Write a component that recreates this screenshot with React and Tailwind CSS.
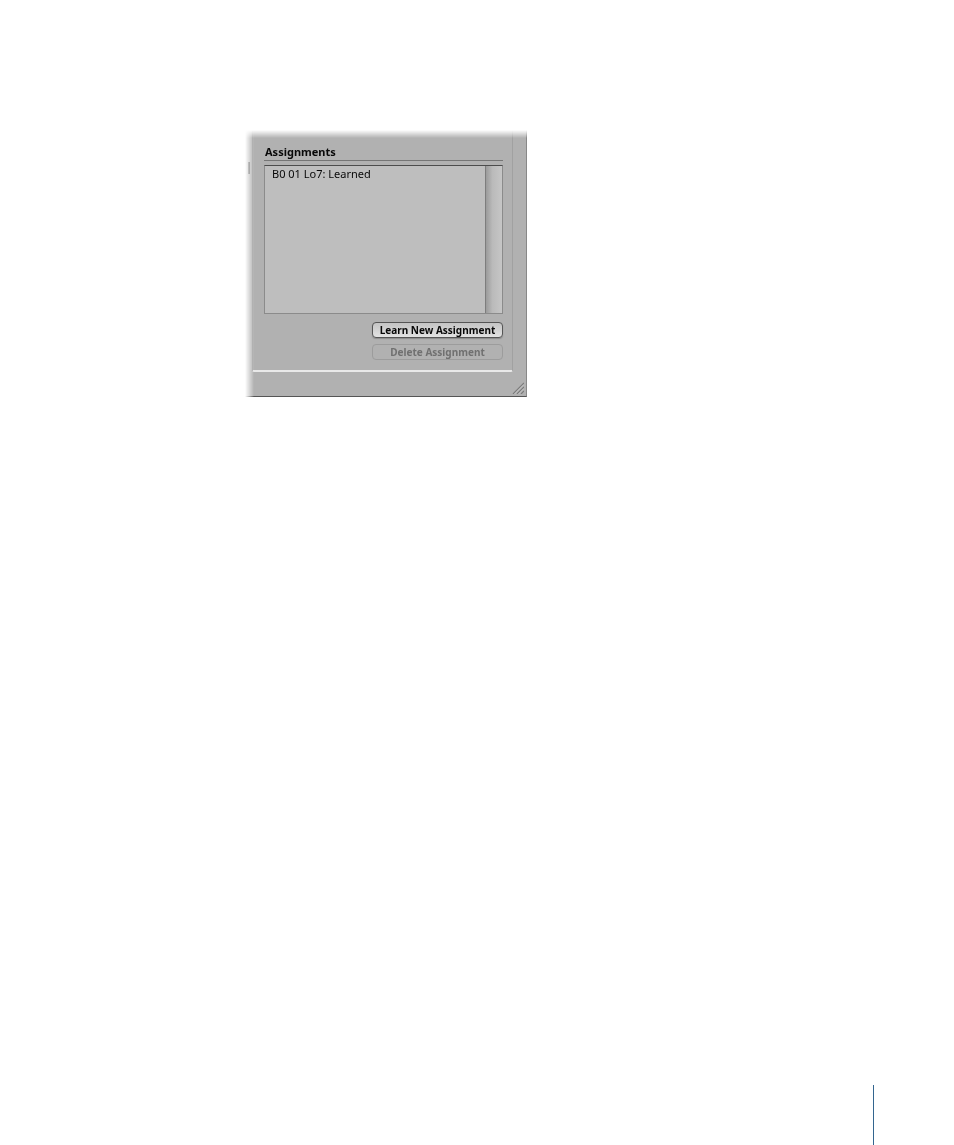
import React, { useState } from 'react';

const ScrollTrack = () => (
  <div className="w-[17px] shrink-0 border-l border-[#7d7d7d] bg-linear-to-r from-[#9b9b9b] via-[#bababa] via-40% to-[#c6c6c6]" />
);

const AssignmentList = ({ items }) => (
  <div className="flex h-[149px] border border-[#8b8b8b] border-t-[#4c4c4c] bg-[#bebebe]">
    <ul className="min-w-0 flex-1 px-[7px] text-[11px] leading-4 text-[#080808]">
      {items.map((item) => (
        <li key={item}>{item}</li>
      ))}
    </ul>
    <ScrollTrack />
  </div>
);

const PanelButton = ({ children, ...props }) => (
  <button
    type="button"
    className="h-4 w-[131px] rounded-sm border border-[#555555] bg-linear-to-b from-[#c4c4c4] to-[#e2e2e2] text-center text-[10px] leading-[14px] font-bold whitespace-nowrap text-[#080808] shadow-[0_1px_1px_#8c8c8c] disabled:border-[#9c9c9c] disabled:bg-none disabled:text-[#707070] disabled:shadow-none"
    {...props}
  >
    {children}
  </button>
);

const ResizeGrip = () => (
  <svg className="absolute right-[2px] bottom-[2px]" width="12" height="12" viewBox="0 0 12 12" fill="none" aria-hidden="true">
    <path d="M1 12L12 1M5 12L12 5M9 12L12 9" stroke="#7b7b7b" strokeWidth="1.2" />
    <path d="M2.5 12L12 2.5M6.5 12L12 6.5" stroke="#cccccc" strokeWidth="0.8" />
  </svg>
);

const AssignmentsPanel = () => {
  const [items, setItems] = useState(['B0 01 Lo7: Learned']);

  const learnAssignment = () => {
    setItems([...items, `B0 01 Lo${items.length + 7}: Learned`]);
  };

  return (
    <section className="relative w-full max-w-[282px] border-r border-b border-r-[#888888] border-b-[#555555] bg-[#b1b1b1] pr-[13px] pb-6 pl-[7px] font-['Noto_Sans',sans-serif] [mask-composite:intersect] [mask-image:linear-gradient(to_bottom,transparent,black_8px),linear-gradient(to_right,transparent,black_9px)]">
      {/* splitter handle on the left edge */}
      <div className="absolute top-8 left-[3px] h-3 w-[2px] bg-[#555555]" />
      <div className="rounded-b-xs border-x border-b-2 border-x-[#a1a1a1] border-b-[#e9e9e9] pt-[14px] pr-[9px] pb-[10px] pl-[11px]">
        <h2 className="mb-1 border-b border-[#757575] px-px text-[11px] leading-4 font-bold text-[#080808]">
          Assignments
        </h2>
        <AssignmentList items={items} />
        <div className="mt-2 flex flex-col items-end gap-[6px]">
          <PanelButton onClick={learnAssignment}>Learn New Assignment</PanelButton>
          <PanelButton disabled>Delete Assignment</PanelButton>
        </div>
      </div>
      <ResizeGrip />
    </section>
  );
};

export default function App() {
  return (
    <div className="flex min-h-screen flex-col bg-white">
      <main className="flex-1 pt-[130px] pl-[245px]">
        <AssignmentsPanel />
      </main>
      <footer className="flex justify-end pr-20">
        <div className="h-[60px] w-px bg-[#33658f]" />
      </footer>
    </div>
  );
}
